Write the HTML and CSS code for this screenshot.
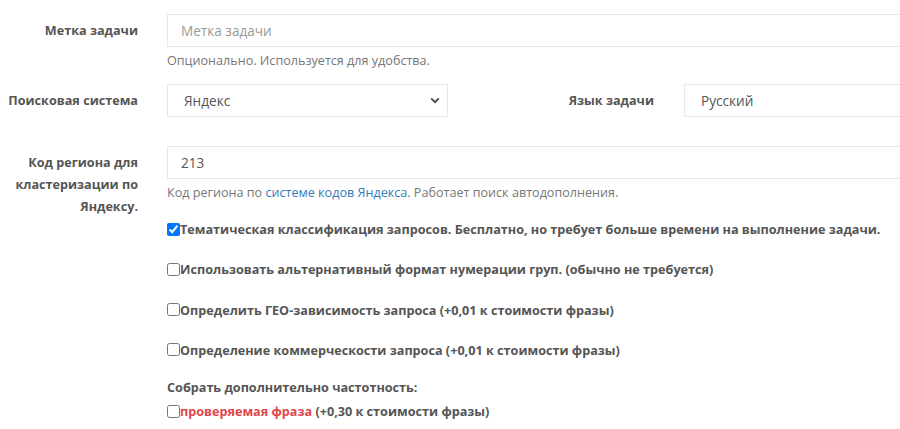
FILE: index.html
```html
<!DOCTYPE html>
<html lang="ru">
<head>
<meta charset="utf-8">
<link rel="stylesheet" href="styles.css">
</head>
<body>
<form class="form">
  <div class="row r1">
    <div class="lbl">Метка задачи</div>
    <div class="field">
      <input class="input" type="text" placeholder="Метка задачи">
      <div class="help">Опционально. Используется для удобства.</div>
    </div>
  </div>

  <div class="row2">
    <div class="lbl">Поисковая система</div>
    <div class="field">
      <div class="select">
        <span>Яндекс</span>
        <svg class="chev" width="10" height="7" viewBox="0 0 10 7"><path d="M1.2 1.4 L5 5.2 L8.8 1.4" fill="none" stroke="#444" stroke-width="1.8"/></svg>
      </div>
    </div>
    <div class="lbl lbl2">Язык задачи</div>
    <div class="field2">
      <div class="input text">Русский</div>
    </div>
  </div>

  <div class="row r3">
    <div class="lbl multi">Код региона для кластеризации по Яндексу.</div>
    <div class="field">
      <div class="input text num">213</div>
      <div class="help">Код региона по <a class="link" href="#">системе кодов Яндекса</a>. Работает поиск автодополнения.</div>
    </div>
  </div>

  <div class="checks">
    <label class="check"><input type="checkbox" checked>Тематическая классификация запросов. Бесплатно, но требует больше времени на выполнение задачи.</label>
    <label class="check"><input type="checkbox">Использовать альтернативный формат нумерации груп. (обычно не требуется)</label>
    <label class="check"><input type="checkbox">Определить ГЕО-зависимость запроса (+0,01 к стоимости фразы)</label>
    <label class="check"><input type="checkbox">Определение коммерческости запроса (+0,01 к стоимости фразы)</label>
    <div class="subhead">Собрать дополнительно частотность:</div>
    <label class="check last"><input type="checkbox"><span class="red">проверяемая фраза</span>&nbsp;(+0,30 к стоимости фразы)</label>
  </div>
</form>
</body>
</html>
```

FILE: styles.css
```css
html, body {
  margin: 0;
  background: #fff;
  overflow: hidden;
}
body {
  font-family: "Open Sans", "Liberation Sans", sans-serif;
  font-size: 12.65px;
  color: #555;
}
.form {
  width: 940px;
  padding-top: 14px;
}
.row {
  display: grid;
  grid-template-columns: 153px 1fr;
}
.row2 {
  display: grid;
  grid-template-columns: 153px 295px 221px 1fr;
  margin-top: 13px;
}
.lbl {
  text-align: right;
  padding-right: 15px;
  font-weight: 700;
  line-height: 20px;
  padding-top: 6px;
}
.field {
  padding-left: 14px;
}
.field2 {
  padding-left: 15px;
}
.input {
  display: block;
  box-sizing: border-box;
  width: 100%;
  height: 33px;
  border: 1px solid #e8e8e8;
  padding: 0 13px;
  font-family: inherit;
  font-size: 13.6px;
  color: #555;
  background: #fff;
  outline: none;
}
.input::placeholder {
  color: #999;
}
.text {
  display: flex;
  align-items: center;
  padding-left: 16px;
}
.num {
  padding-left: 13px;
}
.select {
  box-sizing: border-box;
  height: 33px;
  width: 281px;
  border: 1px solid #e8e8e8;
  display: flex;
  align-items: center;
  justify-content: space-between;
  padding: 0 7px 0 16px;
  font-size: 13.6px;
  color: #555;
}
.chev {
  display: block;
}
.help {
  margin-top: 4px;
  line-height: 20px;
  color: #777;
  font-size: 12.6px;
}
.link {
  color: #337ab7;
  text-decoration: none;
}
.r3 {
  margin-top: 29px;
}
.multi {
  line-height: 22px;
  padding-top: 5px;
}
.checks {
  padding-left: 167px;
  margin-top: 2px;
  font-weight: 700;
}
.check {
  display: flex;
  align-items: center;
  line-height: 20px;
  margin-bottom: 20.3px;
  white-space: nowrap;
}
.check input {
  margin: 0;
  width: 13px;
  height: 13px;
}
.subhead {
  margin-top: -3px;
  line-height: 20px;
  margin-bottom: 4px;
}
.last {
  margin-top: 0;
}
.red {
  color: #e0474c;
}
```
